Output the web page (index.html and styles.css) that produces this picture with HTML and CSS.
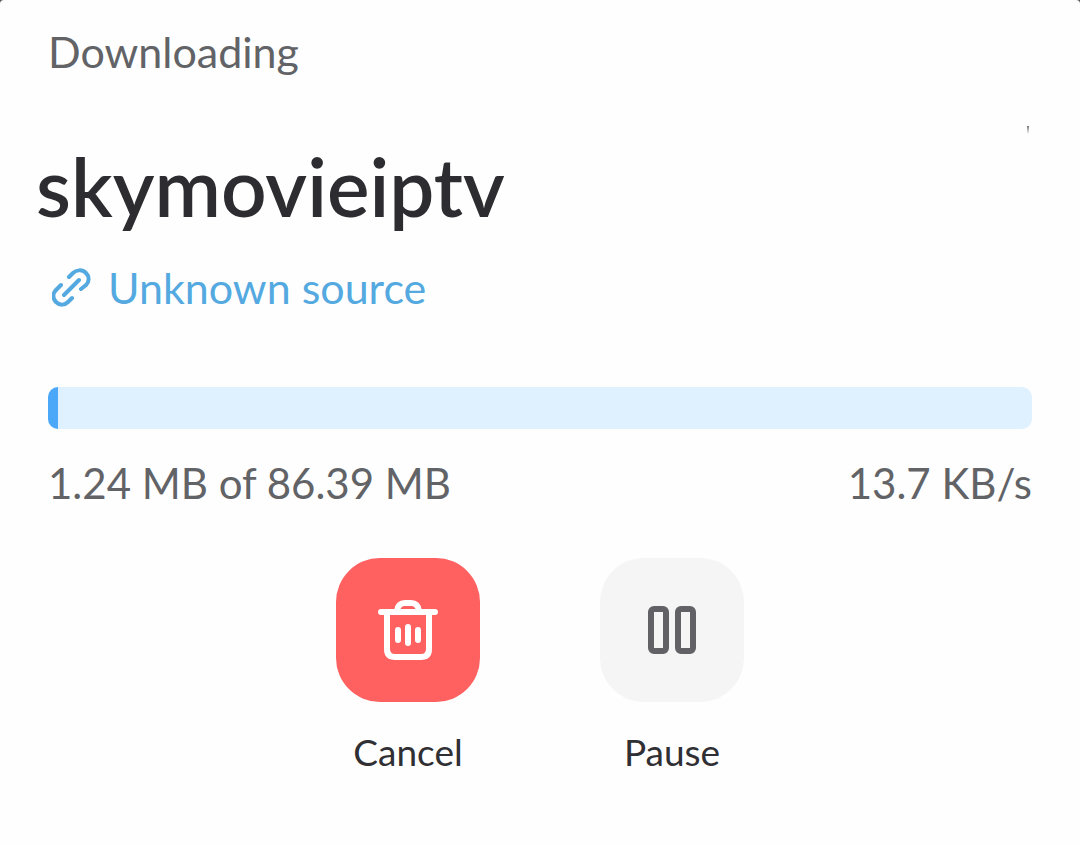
FILE: index.html
```html
<!DOCTYPE html>
<html lang="en">
<head>
  <meta charset="UTF-8" />
  <meta name="viewport" content="width=device-width, initial-scale=1.0"/>
  <title>Downloading</title>
  <link rel="stylesheet" href="styles.css">
</head>
<body>

  <main class="sheet">
    <p class="status">Downloading</p>

    <div class="title-row">
      <h1>skymovieiptv</h1>
      <span class="tick"></span>
    </div>

    <a class="source" href="#">
      <svg class="link-icon" viewBox="0 0 40 40" aria-hidden="true">
        <path d="M17 9 L21 5 C24 2 30 1 34 5 C38 9 37 14 34 17 L29 21 M9 17 L4 22 C1 25 0 30 4 34 C8 38 13 37 16 34 L20 30 M12 27 L27 12"/>
      </svg>
      <span>Unknown source</span>
    </a>

    <div class="progress" role="progressbar" aria-label="Download progress" aria-valuemin="0" aria-valuemax="100" aria-valuenow="1">
      <div class="progress-fill" style="width: 1%"></div>
    </div>

    <div class="stats">
      <span>1.24 MB of 86.39 MB</span>
      <span>13.7 KB/s</span>
    </div>

    <div class="actions">
      <div class="action">
        <button type="button" class="action-button cancel" aria-labelledby="cancelLabel">
          <svg viewBox="0 0 64 64" aria-hidden="true">
            <path d="M5 14 H59 M11 15 V51 Q11 59 19 59 H45 Q53 59 53 51 V15"/>
            <path d="M21 13 Q22 5 29 5 H35 Q42 5 43 13"/>
            <path d="M22 32 V42 M32 29 V45 M42 32 V42"/>
          </svg>
        </button>
        <span id="cancelLabel">Cancel</span>
      </div>
      <div class="action">
        <button type="button" class="action-button pause" aria-labelledby="pauseLabel">
          <svg viewBox="0 0 64 64" aria-hidden="true">
            <rect x="11" y="11" width="15" height="42" rx="3"/>
            <rect x="38" y="11" width="15" height="42" rx="3"/>
          </svg>
        </button>
        <span id="pauseLabel">Pause</span>
      </div>
    </div>
  </main>

</body>
</html>
```
FILE: styles.css
```css
body {
  margin: 0;
  background-color: #55565a;
  font-family: Lato, "Noto Sans", sans-serif;
  font-size: 43px;
  line-height: 52px;
  color: #626367;
}

.sheet {
  box-sizing: border-box;
  min-height: 100vh;
  padding: 26px 48px;
  background-color: #fefefe;
  border-radius: 4px 4px 0 0;
}

.status {
  margin: 0 0 48px;
}

.title-row {
  display: flex;
  justify-content: space-between;
  margin-left: -12px;
}

h1 {
  margin: 0;
  font-size: 80px;
  line-height: 120px;
  font-weight: 600;
  color: #2d2d31;
}

.tick {
  width: 2px;
  height: 8px;
  margin-right: 3px;
  background: linear-gradient(#77777a, #fefefe);
}

.source {
  display: inline-flex;
  align-items: center;
  gap: 16px;
  margin: 16px 0 73px 4px;
  color: #54a9e0;
  text-decoration: none;
}

.link-icon {
  width: 40px;
  height: 40px;
  fill: none;
  stroke: currentColor;
  stroke-width: 4;
  stroke-linecap: round;
}

.progress {
  height: 42px;
  border-radius: 10px;
  overflow: hidden;
  background-color: #dff1ff;
}

.progress-fill {
  height: 100%;
  background-color: #4ba8f8;
}

.stats {
  display: flex;
  justify-content: space-between;
  margin-top: 28px;
  font-size: 42px;
}

.actions {
  display: flex;
  justify-content: center;
  gap: 120px;
  margin-top: 49px;
}

.action {
  display: flex;
  flex-direction: column;
  align-items: center;
  gap: 24px;
  width: 144px;
  font-size: 37px;
  color: #303034;
}

.action-button {
  display: flex;
  align-items: center;
  justify-content: center;
  width: 144px;
  height: 144px;
  padding: 0;
  border: none;
  border-radius: 44px;
  cursor: pointer;
}

.action-button svg {
  width: 64px;
  height: 64px;
  fill: none;
  stroke: currentColor;
  stroke-width: 6;
  stroke-linecap: round;
}

.cancel {
  background-color: #ff6060;
  color: #fff;
}

.pause {
  background-color: #f5f5f5;
  color: #626266;
}
```
